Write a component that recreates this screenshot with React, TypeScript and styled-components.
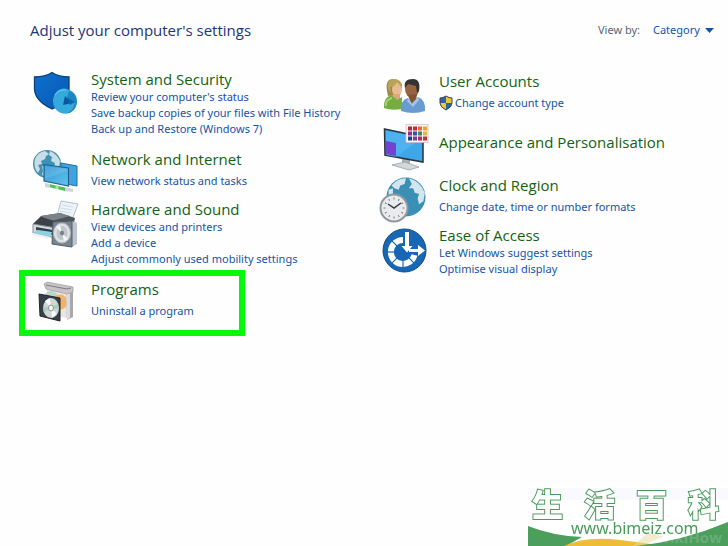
import React from 'react';
import styled, { createGlobalStyle } from 'styled-components';

const GlobalStyle = createGlobalStyle`
  *, *::before, *::after { box-sizing: border-box; }
  body {
    margin: 0;
    background: #fefefe;
    font-family: "Open Sans", "Noto Sans", sans-serif;
  }
`;

const Page = styled.div`
  min-height: 100vh;
  padding: 18px 0 0;
`;

const Header = styled.header`
  display: flex;
  align-items: center;
  justify-content: space-between;
  height: 24px;
  padding: 0 14px 0 30px;
`;

const PageTitle = styled.h1`
  margin: 0;
  font-size: 15px;
  line-height: 24px;
  font-weight: 400;
  color: #1f3478;
`;

const ViewBy = styled.div`
  display: flex;
  align-items: center;
  gap: 13px;
  font-family: "Noto Sans", sans-serif;
  font-size: 11px;
  line-height: 16px;
`;

const ViewLabel = styled.label`
  color: #60646e;
`;

const SelectWrap = styled.span`
  display: flex;
  align-items: center;
  gap: 5px;
`;

const Select = styled.select`
  appearance: none;
  border: 0;
  padding: 0;
  background: transparent;
  font: inherit;
  color: #1553a8;
  cursor: pointer;
`;

const Categories = styled.main`
  display: grid;
  grid-template-columns: 1fr 1fr;
  padding: 27px 0 0 32px;
`;

const Column = styled.div<{ $inset?: number }>`
  display: flex;
  flex-direction: column;
  gap: 8px;
  padding-top: ${p => p.$inset ?? 0}px;
`;

const Item = styled.section<{ $roomy: boolean; $marked: boolean }>`
  position: relative;
  display: flex;
  gap: 11px;
  min-height: 42px;
  margin-bottom: ${p => (p.$roomy ? 4 : 0)}px;
  ${p =>
    p.$marked &&
    `&::after {
      content: "";
      position: absolute;
      left: -13px;
      top: -9px;
      width: 226px;
      height: 66px;
      border: 6px solid #06f90a;
      pointer-events: none;
    }`}
`;

const Icon = styled.svg`
  flex: none;
  width: 48px;
  height: 42px;
  overflow: visible;
`;

const ItemText = styled.div<{ $centered: boolean }>`
  display: flex;
  flex-direction: column;
  align-items: flex-start;
  justify-content: ${p => (p.$centered ? 'center' : 'flex-start')};
  white-space: nowrap;
`;

const ItemTitle = styled.a`
  font-size: 15px;
  line-height: 20px;
  color: #126312;
  text-decoration: none;
`;

const TaskList = styled.ul<{ $spaced: boolean }>`
  list-style: none;
  margin: 0;
  padding: ${p => (p.$spaced ? 4 : 0)}px 0 0;
`;

const Task = styled.li`
  display: flex;
  align-items: center;
  gap: 2px;
  font-family: "Noto Sans", sans-serif;
  font-size: 11px;
  line-height: 16px;
`;

const TaskLink = styled.a`
  color: #1553a8;
  text-decoration: none;
`;

const SmallShield = styled.svg`
  flex: none;
  width: 14px;
  height: 16px;
`;

const Watermark = styled.aside`
  position: fixed;
  right: 0;
  bottom: 0;
  width: 200px;
  height: 60px;
`;

const Swoosh = styled.svg`
  position: absolute;
  inset: 0;
  width: 100%;
  height: 100%;
`;

const Brand = styled.div`
  position: relative;
  display: flex;
  justify-content: space-between;
  padding: 0 9px 0 4px;
  font-family: "Noto Sans CJK SC", sans-serif;
  font-size: 31px;
  font-weight: 900;
  line-height: 34px;
  color: #fff;
  -webkit-text-stroke: 2px #4a9a5c;
  paint-order: stroke fill;
`;

const Site = styled.div`
  position: relative;
  padding-left: 43px;
  font-family: "Noto Sans", sans-serif;
  font-size: 16px;
  line-height: 16px;
  color: #4a9a5c;
`;

const Faint = styled.span`
  position: absolute;
  right: 6px;
  bottom: 0;
  font-size: 15px;
  line-height: 18px;
  font-weight: 700;
  color: rgba(255, 255, 255, 0.16);
`;

const continents = (
  <>
    <path d="M-12-5Q-9-12-2-13L2-10-1-8-2-5-6-3-5 0-9 1-7 5-9 9Q-14 3-12-5Z" />
    <path d="M3-13Q10-10 13-3L12 4 9 7 7 3 8-1 4-3 5-7 2-9Z" />
    <path d="M-5 2L0 4 2 7-2 12-5 11-4 7Z" />
  </>
);

const SecurityIcon = () => (
  <Icon viewBox="0 0 48 42" aria-hidden="true">
    <defs>
      <linearGradient id="shield" x1="0" y1="0" x2="1" y2="1">
        <stop offset="0" stopColor="#0f6fce" />
        <stop offset="1" stopColor="#0759b2" />
      </linearGradient>
    </defs>
    <path d="M2.500 8Q13 8 20 3.500Q27 8 37 8V20Q37 33 20 40Q3 32 2.500 20Z" fill="url(#shield)" stroke="#0b3f78" strokeWidth="1.300" />
    <ellipse cx="34" cy="32.500" rx="11" ry="12" fill="#2187bd" />
    <ellipse cx="32" cy="32" rx="11" ry="12.500" fill="#36a9dc" />
    <path d="M34 32L37 22Q44 25 44 33L35 31Z" fill="#1b86c4" />
    <path d="M33 27L31 36 40 34Z" fill="#0d559c" />
    <path d="M36 29L43 33 38 36Z" fill="#0f67af" />
    <path d="M23 26Q27 20 34 21" fill="none" stroke="#6fd0f0" />
  </Icon>
);

const NetworkIcon = () => (
  <Icon viewBox="0 0 48 42" aria-hidden="true">
    <defs>
      <radialGradient id="globe" cx=".6" cy=".6">
        <stop offset="0" stopColor="#2e94bd" />
        <stop offset="1" stopColor="#4c8fac" />
      </radialGradient>
      <linearGradient id="screen" x1="0" y1="0" x2="1" y2="1">
        <stop offset="0" stopColor="#2f96d3" />
        <stop offset="1" stopColor="#62c4ee" />
      </linearGradient>
    </defs>
    <circle cx="15" cy="15" r="14" fill="url(#globe)" />
    <g transform="translate(15 15)" fill="#c8dee6">{continents}</g>
    <path d="M29 14L45 17V37L29 34Z" fill="#3fa5de" stroke="#286b9c" />
    <path d="M12 15.500L36.500 19V37L12 32Z" fill="url(#screen)" stroke="#245f90" strokeWidth="1.200" />
    <path d="M13 17L35 20V22L13 30Z" fill="#fff" opacity=".12" />
    <path d="M17 35L33 38.500V42L17 38Z" fill="#4fbf58" />
    <path d="M13 34L18 35V39L13 38ZM33 38L41 40V43L33 42Z" fill="#cfd5d6" />
    <path d="M25 37V40" stroke="#a3e6a0" strokeWidth="3" />
  </Icon>
);

const HardwareIcon = () => (
  <Icon viewBox="0 0 48 42" aria-hidden="true">
    <path d="M29 2L46 5 40 21 25 17Z" fill="#eef3f8" stroke="#b6c0ca" />
    <path d="M30 6L41 8M29 9L40 11M28 12L39 14" stroke="#c9dcec" />
    <path d="M9 17L28 14 43 19 42 24 24 30 1 25Z" fill="#4e545a" />
    <path d="M9 17L28 14 38 17 19 22Z" fill="#7b8289" />
    <path d="M1 25L9 18 26 23 23 28Z" fill="#3b4147" />
    <path d="M1 25L24 29V39L1 34Z" fill="#d5dadf" stroke="#858d94" />
    <path d="M4 28L21 31V36L4 31Z" fill="#32414e" />
    <path d="M6 31L20 33 18 38 1 34Z" fill="#8ed2df" />
    <path d="M1 34L18 38 16 40-1 36Z" fill="#edf2f3" />
    <path d="M40 22L45 24V45L40 48Z" fill="#bac6d0" />
    <path d="M21 23L40 22V48L20 45Z" fill="#7a8590" stroke="#525c66" />
    <ellipse cx="30" cy="34" rx="8.500" ry="10" fill="#dde1e4" stroke="#aeb6bd" />
    <ellipse cx="30" cy="34" rx="5.500" ry="7" fill="#c0c5ca" />
    <path d="M30 34L24 28 28 26ZM30 34L36 40 32 42Z" fill="#f5f7f8" />
    <ellipse cx="30" cy="34" rx="2" ry="2.500" fill="#77818a" />
  </Icon>
);

const ProgramsIcon = () => (
  <Icon viewBox="0 0 48 42" aria-hidden="true">
    <path d="M15 10L35 12V39L15 36Z" fill="#e9e5e2" />
    <circle cx="19" cy="19" r="7" fill="#b7d7c9" />
    <circle cx="28" cy="23" r="7.500" fill="#eeb467" />
    <path d="M34 11L41 11V38L35 41Z" fill="#aaa7ab" />
    <path d="M34 12L38 13V39L35 41Z" fill="#dddbdf" />
    <path d="M12 5L15 3 41 8V13L35 15 14 10Z" fill="#c8c3c7" stroke="#a09aa0" strokeWidth=".7" />
    <path d="M14 6L35 10 39 9" fill="none" stroke="#817b82" />
    <path d="M7 15L28 19V42L8 37Z" fill="#393f48" stroke="#20252c" />
    <ellipse cx="19" cy="29" rx="8" ry="10" fill="#cfd6d5" />
    <path d="M19 29L13 22 18 19ZM19 29L25 35 20 39Z" fill="#f8fafa" />
    <path d="M19 29L26 25 27 30ZM19 29L12 33 11 28Z" fill="#a8ccb5" />
    <ellipse cx="19" cy="29" rx="2.500" ry="3" fill="#f7f7f7" stroke="#8a9494" />
  </Icon>
);

const UsersIcon = () => (
  <Icon viewBox="0 0 48 42" aria-hidden="true">
    <path d="M7 20Q5 8 13 8Q22 8 22 16L20 24 8 25Z" fill="#a08a49" />
    <ellipse cx="17" cy="18" rx="5" ry="7" fill="#e9bb91" />
    <path d="M10 16Q15 16 17 11L22 17Q22 9 14 8Q7 8 8 18L11 22Z" fill="#b9a35b" />
    <path d="M13 23H20V28L15 30Z" fill="#d9a67d" />
    <path d="M4 37Q3 26 12 24L17 29 22 26V38Q11 40 4 37Z" fill="#75ad41" />
    <path d="M6 35Q5 29 12 27" fill="none" stroke="#a6d173" strokeWidth="2" />
    <ellipse cx="32" cy="18" rx="7" ry="9" fill="#98643f" />
    <path d="M25 17Q23 8 33 8Q41 8 39 20L37 22 36 15 28 13Z" fill="#343331" />
    <path d="M28 24L37 23 36 30 31 33Z" fill="#865331" />
    <path d="M21 40Q20 29 28 27L32 32 38 26Q46 29 45 40Q33 44 21 40Z" fill="#6a9bd0" />
    <path d="M28 27L32 33 38 26 39 29 33 36 27 30Z" fill="#a4c5e7" />
  </Icon>
);

const swatches = ['#b5243a', '#c22f33', '#e8683b', '#f0a22f', '#8e2f86', '#3e4cae', '#3c8b56', '#e0b93e', '#27388d', '#7a3f9c', '#b52b53', '#c3323b'];

const AppearanceIcon = () => (
  <Icon viewBox="0 0 48 42" aria-hidden="true">
    <path d="M22 36L30 38V45L22 43Z" fill="#aab2b8" />
    <path d="M12 44L25 41 39 46 29 49Z" fill="#d3d8dc" stroke="#8e979e" strokeWidth=".7" />
    <path d="M4.500 8L43 16V41L5 34Z" fill="#3fa6ea" stroke="#2a343d" strokeWidth="1.500" />
    <path d="M6 10L42 17 16 36 6 34Z" fill="#5bbcf5" opacity=".55" />
    <path d="M6 20L16 22V35L6 33Z" fill="#7342ce" />
    <rect x="26" y="3.500" width="22" height="18" fill="#fbf4f2" stroke="#cbbdbd" strokeWidth=".7" />
    {swatches.map((c, i) => (
      <rect key={i} x={28 + (i % 4) * 5} y={5.5 + Math.floor(i / 4) * 5} width="4" height="4" fill={c} />
    ))}
  </Icon>
);

const ClockIcon = () => (
  <Icon viewBox="0 0 48 42" aria-hidden="true">
    <circle cx="26" cy="22" r="19.500" fill="#3a8fb7" />
    <g transform="translate(26 22) scale(1.450)" fill="#d3e6ee">
      <path d="M-10-8Q-6-13 0-13L-1-9-4-8-5-5-8-6Z" />
      <path d="M2-13Q10-11 13-3L12 3 9 5 8 1 9-2 6-3 5-6 2-6 4-9Z" />
      <path d="M-12-5L-9-6-9-1-12 1Z" />
    </g>
    <circle cx="14" cy="33" r="13.500" fill="#e9ebed" stroke="#90979d" strokeWidth="2" />
    <g stroke="#777d83" strokeWidth="1">
      {[0, 30, 60, 90, 120, 150, 180, 210, 240, 270, 300, 330].map(a => (
        <path key={a} d="M14 22.500V24.500" transform={`rotate(${a} 14 33)`} />
      ))}
    </g>
    <path d="M8 29L14 33 21 28" fill="none" stroke="#363b40" strokeWidth="1.500" />
  </Icon>
);

const EaseIcon = () => (
  <Icon viewBox="0 0 48 42" aria-hidden="true">
    <circle cx="24.500" cy="25.500" r="21.500" fill="#1767b5" stroke="#104a83" />
    <path d="M23 15A12 12 0 1 0 34.500 30" fill="none" stroke="#fff" strokeWidth="6" />
    <g stroke="#1767b5" strokeWidth="1.200">
      {[135, 180, 225, 270, 315].map(a => (
        <path key={a} d="M23 11V19" transform={`rotate(${a} 23 27)`} />
      ))}
    </g>
    <path d="M25 7H29V21H32.500L27 27.500 21.500 21H25Z" fill="#fff" />
    <path d="M29 24H38V20L45 25.500 38 31V27H29Z" fill="#fff" />
  </Icon>
);

const UacShield = () => (
  <SmallShield viewBox="0 0 14 16" aria-hidden="true">
    <path d="M1 3Q4 3 7 1Q10 3 13 3V8Q13 12 7 15Q1 12 1 8Z" fill="#2865aa" />
    <path d="M7 1Q10 3 13 3V8H7ZM1 8H7V15Q1 12 1 8Z" fill="#f0c537" />
    <path d="M1 3Q4 3 7 1Q10 3 13 3V8Q13 12 7 15Q1 12 1 8Z" fill="none" stroke="#37495b" />
  </SmallShield>
);

type Category = {
  title: string;
  icon: React.FC;
  tasks: string[];
  shielded?: boolean;
  marked?: boolean;
};

const left: Category[] = [
  {
    title: 'System and Security',
    icon: SecurityIcon,
    tasks: ["Review your computer's status", 'Save backup copies of your files with File History', 'Back up and Restore (Windows 7)'],
  },
  { title: 'Network and Internet', icon: NetworkIcon, tasks: ['View network status and tasks'] },
  {
    title: 'Hardware and Sound',
    icon: HardwareIcon,
    tasks: ['View devices and printers', 'Add a device', 'Adjust commonly used mobility settings'],
  },
  { title: 'Programs', icon: ProgramsIcon, tasks: ['Uninstall a program'], marked: true },
];

const right: Category[] = [
  { title: 'User Accounts', icon: UsersIcon, tasks: ['Change account type'], shielded: true },
  { title: 'Appearance and Personalisation', icon: AppearanceIcon, tasks: [] },
  { title: 'Clock and Region', icon: ClockIcon, tasks: ['Change date, time or number formats'] },
  { title: 'Ease of Access', icon: EaseIcon, tasks: ['Let Windows suggest settings', 'Optimise visual display'] },
];

const CategoryItem = ({ title, icon: Glyph, tasks, shielded, marked }: Category) => (
  <Item $roomy={tasks.length !== 1} $marked={!!marked}>
    <Glyph />
    <ItemText $centered={tasks.length === 0}>
      <ItemTitle href="#">{title}</ItemTitle>
      {tasks.length > 0 && (
        <TaskList $spaced={tasks.length === 1}>
          {tasks.map(task => (
            <Task key={task}>
              {shielded && <UacShield />}
              <TaskLink href="#">{task}</TaskLink>
            </Task>
          ))}
        </TaskList>
      )}
    </ItemText>
  </Item>
);

export default function App() {
  return (
    <Page>
      <GlobalStyle />
      <Header>
        <PageTitle>Adjust your computer's settings</PageTitle>
        <ViewBy>
          <ViewLabel htmlFor="view">View by:</ViewLabel>
          <SelectWrap>
            <Select id="view" defaultValue="Category">
              <option>Category</option>
            </Select>
            <svg width="9" height="5" viewBox="0 0 9 5" aria-hidden="true">
              <path d="M0 0H9L4.500 5Z" fill="#1553a8" />
            </svg>
          </SelectWrap>
        </ViewBy>
      </Header>
      <Categories>
        <Column>{left.map(c => <CategoryItem key={c.title} {...c} />)}</Column>
        <Column $inset={2}>{right.map(c => <CategoryItem key={c.title} {...c} />)}</Column>
      </Categories>
      <Watermark>
        <Swoosh viewBox="0 0 200 60" preserveAspectRatio="none" aria-hidden="true">
          <path d="M0 0H200V60H0Z" fill="#fff" />
          <path d="M0 2H200V14H0Z" fill="#faf9fd" />
          <path d="M0 40Q25 50 54 51L38 60H0Z" fill="#4c9e5d" />
          <path d="M36 60Q55 51 82 53Q112 56 135 60Z" fill="#efbd35" />
          <path d="M105 60L118 48Q130 47 135 51L125 55Q116 60 105 60Z" fill="#e5d9a0" opacity=".5" />
          <path d="M108 60Q155 55 200 36V60Z" fill="#4c9e5d" />
        </Swoosh>
        <Brand>
          {['生', '活', '百', '科'].map(ch => <span key={ch}>{ch}</span>)}
        </Brand>
        <Site>www.bimeiz.com</Site>
        <Faint>wikiHow</Faint>
      </Watermark>
    </Page>
  );
}
